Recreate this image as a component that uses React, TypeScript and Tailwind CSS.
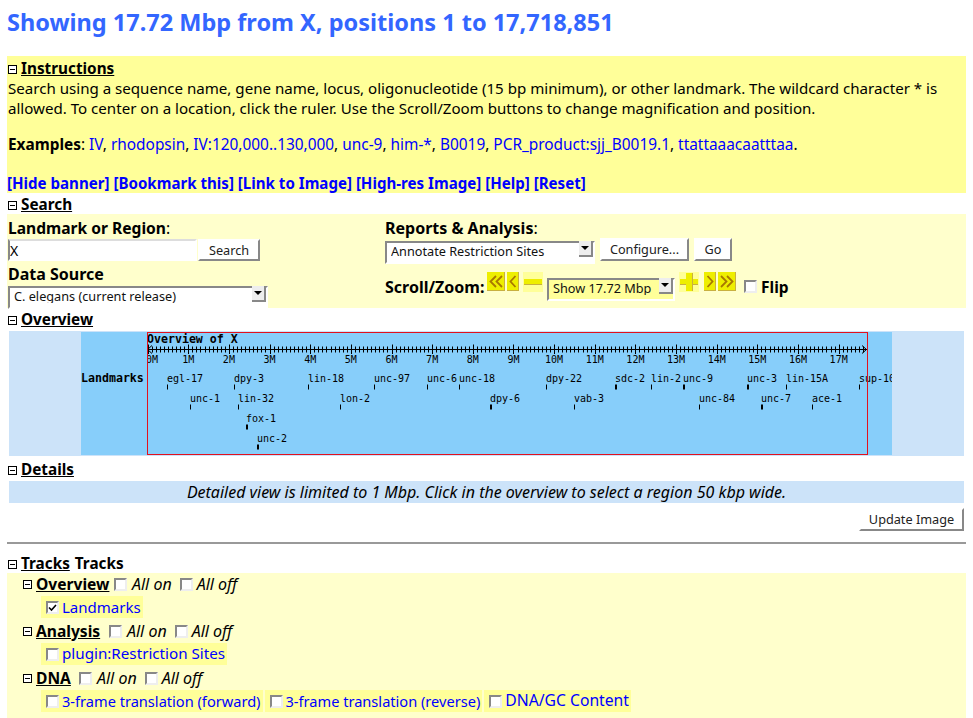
import type { ReactNode } from 'react';

const FONT = "font-['Noto_Sans',sans-serif]";
const LINK = 'text-[#0000ff]';

const RULER_LABELS = Array.from({ length: 18 }, (_, i) => i);

const LANDMARKS = [
  { name: 'egl-17', x: 86, row: 0 },
  { name: 'dpy-3', x: 153, row: 0 },
  { name: 'lin-18', x: 227, row: 0 },
  { name: 'unc-97', x: 293, row: 0 },
  { name: 'unc-6', x: 346, row: 0 },
  { name: 'unc-18', x: 378, row: 0 },
  { name: 'dpy-22', x: 465, row: 0 },
  { name: 'sdc-2', x: 534, row: 0, thick: true },
  { name: 'lin-2', x: 570, row: 0 },
  { name: 'unc-9', x: 602, row: 0, thick: true },
  { name: 'unc-3', x: 666, row: 0, thick: true },
  { name: 'lin-15A', x: 705, row: 0 },
  { name: 'sup-10', x: 778, row: 0 },
  { name: 'unc-1', x: 109, row: 1 },
  { name: 'lin-32', x: 157, row: 1 },
  { name: 'lon-2', x: 259, row: 1 },
  { name: 'dpy-6', x: 409, row: 1, thick: true },
  { name: 'vab-3', x: 493, row: 1 },
  { name: 'unc-84', x: 618, row: 1 },
  { name: 'unc-7', x: 680, row: 1, thick: true },
  { name: 'ace-1', x: 731, row: 1 },
  { name: 'fox-1', x: 165, row: 2, thick: true },
  { name: 'unc-2', x: 176, row: 3, thick: true },
];

const MONO = "'DejaVu Sans Mono', monospace";

function OverviewImage() {
  const start = 66.6;
  const perMbp = 40.65;
  const minor = Array.from({ length: 177 }, (_, i) => start + (i * perMbp) / 10);

  return (
    <svg width="811" height="123" viewBox="0 0 811 123" className="block bg-[#87cefa]">
      <defs>
        <clipPath id="plot">
          <rect x="66" y="0" width="745" height="123" />
        </clipPath>
      </defs>
      <text x="66" y="11" fontFamily={MONO} fontSize="11.6" fontWeight="bold" fill="#000">
        Overview of X
      </text>
      <line x1="66" x2="786" y1="17.5" y2="17.5" stroke="#000" />
      <path d="M71 13.5 L66.5 17.5 L71 21.5 M781 13.5 L785.5 17.5 L781 21.5" fill="none" stroke="#000" />
      {minor.map((x, i) => (
        <line
          key={i}
          x1={Math.round(x) + 0.5}
          x2={Math.round(x) + 0.5}
          y1={i % 10 === 0 ? 12.5 : 14.5}
          y2={i % 10 === 0 ? 22 : 20.5}
          stroke="#000"
        />
      ))}
      <g clipPath="url(#plot)">
        {RULER_LABELS.map((m) => (
          <text
            key={m}
            x={m === 0 ? 71 : start + m * perMbp}
            y="31"
            textAnchor="middle"
            fontFamily={MONO}
            fontSize="10"
            fill="#000"
          >
            {m}M
          </text>
        ))}
      </g>
      <text x="0" y="50" fontFamily={MONO} fontSize="11.6" fontWeight="bold" fill="#000">
        Landmarks
      </text>
      {LANDMARKS.map((l) => (
        <g key={l.name}>
          <text x={l.x} y={50 + l.row * 20} fontFamily={MONO} fontSize="10" fill="#000">
            {l.name}
          </text>
          <rect x={l.x} y={52.5 + l.row * 20} width={l.thick ? 2 : 1} height="5" fill="#000" />
        </g>
      ))}
      <rect x="66.5" y="0.5" width="720" height="122" fill="none" stroke="#e3101c" />
    </svg>
  );
}

function Toggle() {
  return (
    <span className="inline-flex w-[9px] h-[9px] border border-black bg-white items-center justify-center shrink-0">
      <span className="w-[5px] h-px bg-black" />
    </span>
  );
}

function SectionHead({ children, after }: { children: ReactNode; after?: ReactNode }) {
  return (
    <div className="flex items-center h-[22px] pt-[2px] pl-[1px]">
      <Toggle />
      <span className="ml-[4px] text-[15.3px] font-bold underline leading-none text-black">{children}</span>
      {after}
    </div>
  );
}

function Bevel({ children, className = '' }: { children: ReactNode; className?: string }) {
  return (
    <button
      className={`bg-white border-2 border-t-[#fff] border-l-[#fff] border-r-[#888] border-b-[#888] text-[12.7px] text-[#222] leading-none ${className}`}
    >
      {children}
    </button>
  );
}

function Dropdown({ value, className = '', bg = 'bg-white' }: { value: string; className?: string; bg?: string }) {
  return (
    <div className={`relative h-[23px] ${className}`}>
      <select
        defaultValue={value}
        className={`appearance-none w-full h-full ${bg} border-2 border-t-[#888] border-l-[#888] border-r-white border-b-white pl-[4px] pb-[3px] text-[12.7px] text-[#111] leading-none outline-none`}
      >
        <option>{value}</option>
      </select>
      <span className="absolute right-[2px] top-[3px] w-[14px] h-[16px] bg-[#eeeeee] border-r-2 border-b-2 border-[#888] flex items-center justify-center">
        <span className="w-0 h-0 border-x-[4px] border-x-transparent border-t-[4px] border-t-black" />
      </span>
    </div>
  );
}

function Check({ checked = false }: { checked?: boolean }) {
  return (
    <span className="inline-flex w-[13px] h-[13px] shrink-0 bg-white border-2 border-t-[#888] border-l-[#888] border-r-[#eee] border-b-[#eee] items-center justify-center">
      {checked && (
        <svg width="9" height="9" viewBox="0 0 9 9">
          <path d="M1 4.5 L3.5 7 L8 2" fill="none" stroke="#000" strokeWidth="1.6" />
        </svg>
      )}
    </span>
  );
}

function ScrollButton({ kind }: { kind: 'll' | 'l' | 'r' | 'rr' }) {
  const narrow = kind === 'l' || kind === 'r';
  const w = narrow ? 12 : 18;
  const paths: Record<string, string> = {
    ll: 'M9 4 L3.5 9.5 L9 15 M15 4 L9.5 9.5 L15 15',
    l: 'M8.5 4 L3.5 9.5 L8.5 15',
    r: 'M3.5 4 L8.5 9.5 L3.5 15',
    rr: 'M3 4 L8.5 9.5 L3 15 M9 4 L14.5 9.5 L9 15',
  };
  return (
    <svg width={w} height="19" viewBox={`0 0 ${w} 19`} className="shrink-0">
      <rect width={w} height="19" fill="#c8b040" />
      <rect width={w - 1} height="18" fill="#eeee00" />
      <path d={paths[kind]} fill="none" stroke="#a87800" strokeWidth="1.8" />
    </svg>
  );
}

function Sign({ plus = false }: { plus?: boolean }) {
  return (
    <svg width="20" height="20" viewBox="0 0 20 20" className="block shrink-0">
      <rect width="20" height="20" fill="#ffff99" />
      <rect x="1" y="7" width="18" height="6" fill="#eeee00" />
      <rect x="1" y="12" width="18" height="1" fill="#c8b040" />
      {plus && <rect x="7" y="1" width="6" height="18" fill="#eeee00" />}
      {plus && <rect x="13" y="1" width="1" height="18" fill="#c8b040" />}
    </svg>
  );
}

function TrackGroup({ title, width, children }: { title: string; width: string; children: ReactNode }) {
  return (
    <div className="mb-[2px]">
      <div className="flex items-center h-[23px] pl-[16px]">
        <Toggle />
        <span className={`ml-[4px] ${width} text-[15.6px] font-bold underline leading-none`}>
          {title}
        </span>
        <span className="flex items-center italic text-[16px]">
          <Check />
          <span className="ml-[5px] pb-[2px]">All on</span>
          <span className="flex ml-[8px]">
            <Check />
          </span>
          <span className="ml-[4px] pb-[2px]">All off</span>
        </span>
      </div>
      <div className="flex pl-[34px] gap-[2px]">{children}</div>
    </div>
  );
}

function TrackItem({
  label,
  checked = false,
  size = 'text-[15px]',
}: {
  label: string;
  checked?: boolean;
  size?: string;
}) {
  return (
    <span className="flex items-center h-[22px] bg-[#ffff99] pl-[5px] pr-[2px] gap-[3px]">
      <Check checked={checked} />
      <span className={`${LINK} ${size} leading-none`}>{label}</span>
    </span>
  );
}

const EXAMPLES = [
  'IV',
  'rhodopsin',
  'IV:120,000..130,000',
  'unc-9',
  'him-*',
  'B0019',
  'PCR_product:sjj_B0019.1',
  'ttattaaacaatttaa',
];

const BANNER_LINKS = ['Hide banner', 'Bookmark this', 'Link to Image', 'High-res Image', 'Help', 'Reset'];

export default function App() {
  return (
    <div className={`${FONT} w-[973px] h-[718px] overflow-hidden bg-white text-black`}>
      <div className="px-[7px]">
        <h1 className="h-[56px] pt-[8px] text-[23.5px] leading-[28px] font-bold text-[#3366ff]">
          Showing 17.72 Mbp from X, positions 1 to 17,718,851
        </h1>

        {/* Instructions */}
        <div className="h-[137px] bg-[#ffff99] pt-px">
          <SectionHead>Instructions</SectionHead>
          <p className="pl-[1px] text-[15.1px] leading-[20px] mt-[-1px]">
            Search using a sequence name, gene name, locus, oligonucleotide (15 bp minimum), or other landmark. The
            wildcard character * is allowed. To center on a location, click the ruler. Use the Scroll/Zoom buttons to
            change magnification and position.
          </p>
          <p className="pl-[1px] text-[15.4px] leading-[20px] mt-[17px]">
            <b>Examples</b>:{' '}
            {EXAMPLES.map((e, i) => (
              <span key={e}>
                <span className={LINK}>{e}</span>
                {i < EXAMPLES.length - 1 ? ', ' : '.'}
              </span>
            ))}
          </p>
          <p className={`${LINK} text-[15.1px] font-bold leading-[20px] mt-[18px]`}>
            {BANNER_LINKS.map((l) => `[${l}]`).join(' ')}
          </p>
        </div>

        {/* Search */}
        <SectionHead>Search</SectionHead>
        <div className="h-[94px] mt-[-1px] bg-[#ffffcc] grid grid-cols-[377px_1fr] pl-[1px]">
          <div>
            <div className="text-[15.6px] leading-[20px] mt-[4px]">
              <b>Landmark or Region</b>:
            </div>
            <div className="flex gap-[1px] mt-[1px]">
              <input
                defaultValue="X"
                className="w-[189px] h-[22px] bg-white border-2 border-t-[#ddd] border-l-[#888] border-r-white border-b-white text-[14px] leading-none outline-none"
              />
              <Bevel className="w-[62px] h-[22px]">Search</Bevel>
            </div>
            <div className="text-[16px] font-bold leading-[20px] mt-[3px]">Data Source</div>
            <Dropdown value="C. elegans (current release)" className="w-[260px] mt-[-1px]" />
          </div>
          <div>
            <div className="text-[16px] leading-[20px] mt-[4px]">
              <b>Reports &amp; Analysis</b>:
            </div>
            <div className="flex gap-[5px]">
              <Dropdown value="Annotate Restriction Sites" className="w-[210px]" />
              <Bevel className="w-[89px] h-[23px]">Configure...</Bevel>
              <Bevel className="w-[38px] h-[23px]">Go</Bevel>
            </div>
            <div className="flex items-start mt-[11px] h-[26px]">
              <b className="text-[16px] leading-[24px] w-[102px] shrink-0 mt-[3px]">Scroll/Zoom:</b>
              <span className="flex items-center gap-[2px]">
                <ScrollButton kind="ll" />
                <ScrollButton kind="l" />
              </span>
              <span className="ml-[4px]">
                <Sign />
              </span>
              <Dropdown value="Show 17.72 Mbp" className="w-[128px] ml-[4px] mt-[3px]" bg="bg-[#ffff99]" />
              <span className="ml-[4px]">
                <Sign plus />
              </span>
              <span className="flex items-center gap-[2px] ml-[5px]">
                <ScrollButton kind="r" />
                <ScrollButton kind="rr" />
              </span>
              <span className="flex ml-[8px] mt-[8px]">
                <Check />
              </span>
              <b className="text-[15.5px] leading-[24px] ml-[4px] mt-[3px]">Flip</b>
            </div>
          </div>
        </div>

        {/* Overview */}
        <SectionHead>Overview</SectionHead>
        <div className="mx-[2px] mt-px py-px bg-[#cce3f9] flex justify-center">
          <OverviewImage />
        </div>

        {/* Details */}
        <div className="mt-[2px]">
          <SectionHead>Details</SectionHead>
        </div>
        <div className="mx-[2px] mt-px h-[22px] flex items-center justify-center bg-[#cce3f9] italic text-[16px]">
          Detailed view is limited to 1 Mbp. Click in the overview to select a region 50 kbp wide.
        </div>
        <div className="flex justify-end pr-[2px] mt-[5px]">
          <Bevel className="w-[105px] h-[23px]">Update Image</Bevel>
        </div>
        <hr className="mt-[11px] border-t-2 border-[#999]" />

        {/* Tracks */}
        <div className="mt-[8px]">
          <SectionHead after={<span className="ml-[5px] text-[15.3px] font-bold leading-none">Tracks</span>}>
            Tracks
          </SectionHead>
        </div>
        <div className="h-[145px] mt-[-1px] bg-[#ffffcc]">
          <TrackGroup title="Overview" width="w-[78px]">
            <TrackItem label="Landmarks" checked />
          </TrackGroup>
          <TrackGroup title="Analysis" width="w-[73px]">
            <TrackItem label="plugin:Restriction Sites" size="text-[15.2px]" />
          </TrackGroup>
          <TrackGroup title="DNA" width="w-[43px]">
            <TrackItem label="3-frame translation (forward)" size="text-[14.6px]" />
            <TrackItem label="3-frame translation (reverse)" size="text-[14.6px]" />
            <TrackItem label="DNA/GC Content" size="text-[15.7px]" />
          </TrackGroup>
        </div>
      </div>
    </div>
  );
}
